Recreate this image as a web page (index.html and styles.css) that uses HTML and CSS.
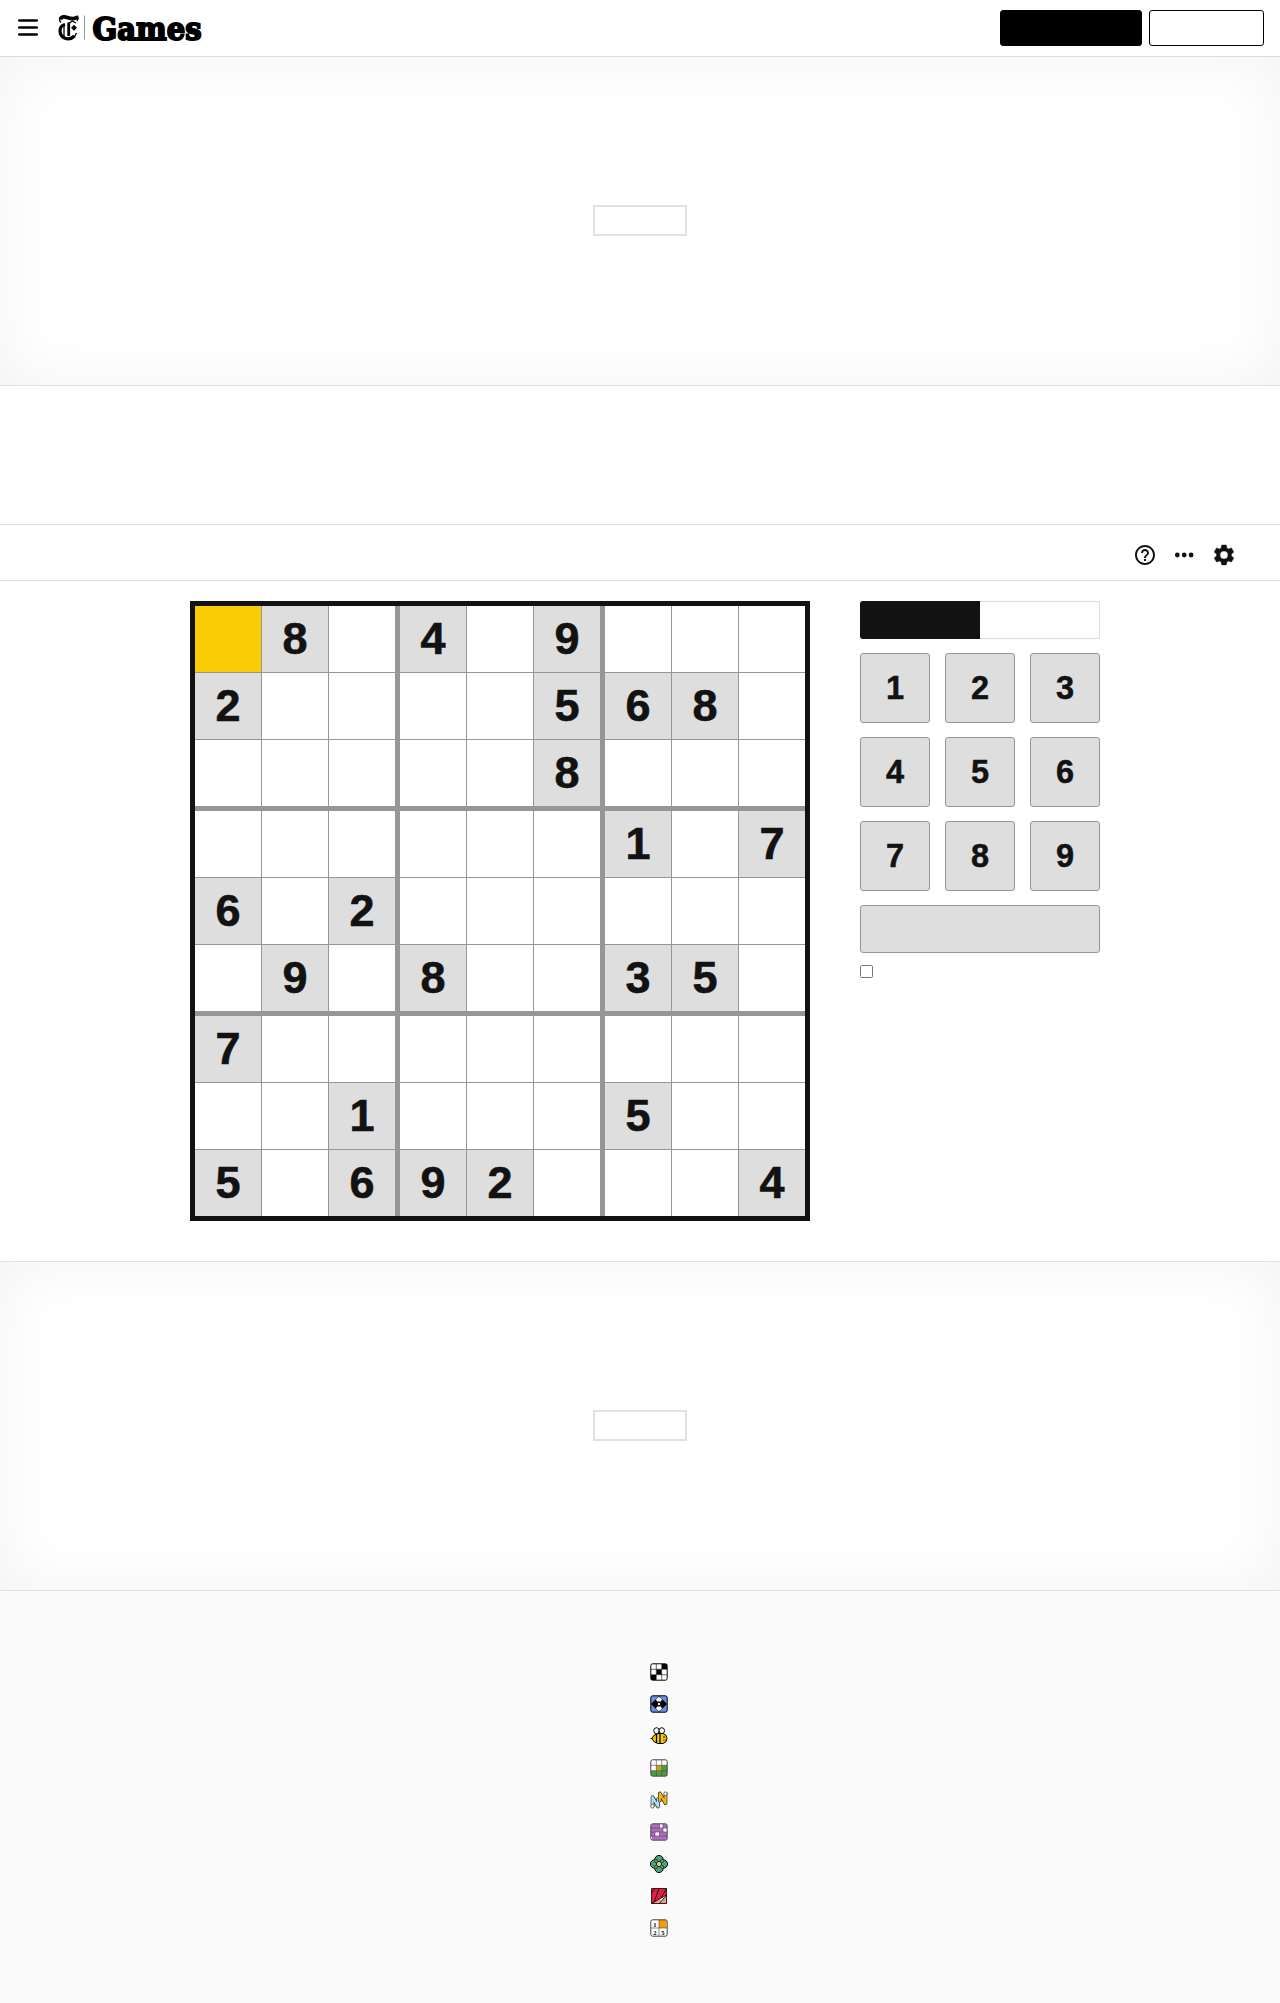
FILE: index.html
```html
<!DOCTYPE html>
<html lang="en">
<head>
<meta charset="utf-8">
<title>Sudoku</title>
<link rel="stylesheet" href="styles.css">
</head>
<body>
<header class="header">
  <svg class="menu" width="20" height="18" viewBox="0 0 20 18"><path d="M1.200 1.500h17.600M1.200 8.500h17.600M1.200 15.500h17.600" stroke="#000" stroke-width="2.500" stroke-linecap="round"/></svg>
  <svg class="logo" width="160" height="40" viewBox="0 -3 160 40">
    <g fill="none" stroke="#000"><path stroke-width="1.300" d="M4.800 11.500C2.500 9 3.500 6 6.500 5M20.500 22C19 27 14 29 10 28M8 13v13M12.500 12.500l4-2.500 3.500 2M21 10c1-2 2-3 .5-5.500"/><path stroke-width="3.800" d="M4.500 8.500C5.500 5.200 8.500 5.500 12 6.800S18.500 8.300 21.500 6"/><path stroke-width="3.200" d="M9 13.500C2.500 15 2.500 24 8.500 27 12 28.500 16 27.500 18.500 25"/><path stroke-width="2.800" d="M12.700 11.500V25"/></g>
    <path d="M18 13.800l3 3-3 3-3-3z"/>
    <path d="M28.500 4.500v24" stroke="#999"/>
    <text class="wordmark" x="36.500" y="28.700" textLength="109" lengthAdjust="spacingAndGlyphs">Games</text>
  </svg>
  <div class="actions"><button class="btn btn-dark" aria-label="Subscribe"></button><button class="btn btn-light" aria-label="Log in"></button></div>
</header>
<section class="ad"><div class="ad-box"></div></section>
<div class="title-area"></div>
<nav class="toolbar">
  <svg width="24" height="24" viewBox="0 0 24 24"><path fill="#121212" d="M11 18h2v-2h-2v2zm1-16C6.480 2 2 6.480 2 12s4.480 10 10 10 10-4.480 10-10S17.520 2 12 2zm0 18c-4.410 0-8-3.590-8-8s3.590-8 8-8 8 3.590 8 8-3.590 8-8 8zm0-14c-2.210 0-4 1.790-4 4h2c0-1.100.9-2 2-2s2 .9 2 2c0 2-3 1.750-3 5h2c0-2.250 3-2.500 3-5 0-2.210-1.790-4-4-4z"/></svg>
  <svg width="24" height="24" viewBox="0 0 24 24" fill="#121212"><circle cx="4.300" cy="12" r="2.400"/><circle cx="11.200" cy="12" r="2.400"/><circle cx="18.100" cy="12" r="2.400"/></svg>
  <svg width="24" height="24" viewBox="0 0 24 24"><path fill="#121212" stroke="#121212" stroke-width=".4" d="M19.430 12.980c.04-.32.070-.64.070-.98s-.03-.66-.07-.98l2.110-1.650c.19-.15.24-.42.12-.64l-2-3.460c-.12-.22-.39-.3-.61-.22l-2.490 1c-.52-.4-1.080-.73-1.690-.98l-.38-2.650C14.460 2.180 14.250 2 14 2h-4c-.25 0-.46.18-.49.42l-.38 2.650c-.61.25-1.170.59-1.690.98l-2.490-1c-.23-.09-.49 0-.61.22l-2 3.460c-.13.22-.07.49.12.64l2.110 1.650c-.04.32-.07.65-.07.98s.03.66.07.98l-2.110 1.650c-.19.15-.24.42-.12.64l2 3.460c.12.22.39.3.61.22l2.490-1c.52.4 1.080.73 1.690.98l.38 2.650c.03.24.24.42.49.42h4c.25 0 .46-.18.49-.42l.38-2.650c.61-.25 1.170-.59 1.690-.98l2.490 1c.23.09.49 0 .61-.22l2-3.460c.12-.22.070-.49-.12-.64l-2.110-1.650zM12 16a4 4 0 1 1 0-8 4 4 0 0 1 0 8z"/></svg>
</nav>
<main class="game">
  <div class="board">
    <div class="box"><i class="sel"></i><b>8</b><i></i><b>2</b><i></i><i></i><i></i><i></i><i></i></div>
    <div class="box"><b>4</b><i></i><b>9</b><i></i><i></i><b>5</b><i></i><i></i><b>8</b></div>
    <div class="box"><i></i><i></i><i></i><b>6</b><b>8</b><i></i><i></i><i></i><i></i></div>
    <div class="box"><i></i><i></i><i></i><b>6</b><i></i><b>2</b><i></i><b>9</b><i></i></div>
    <div class="box"><i></i><i></i><i></i><i></i><i></i><i></i><b>8</b><i></i><i></i></div>
    <div class="box"><b>1</b><i></i><b>7</b><i></i><i></i><i></i><b>3</b><b>5</b><i></i></div>
    <div class="box"><b>7</b><i></i><i></i><i></i><i></i><b>1</b><b>5</b><i></i><b>6</b></div>
    <div class="box"><i></i><i></i><i></i><i></i><i></i><i></i><b>9</b><b>2</b><i></i></div>
    <div class="box"><i></i><i></i><i></i><b>5</b><i></i><i></i><i></i><i></i><b>4</b></div>
  </div>
  <div class="controls">
    <div class="mode"><span class="mode-on"></span><span class="mode-off"></span></div>
    <div class="pad">
      <button class="key">1</button><button class="key">2</button><button class="key">3</button>
      <button class="key">4</button><button class="key">5</button><button class="key">6</button>
      <button class="key">7</button><button class="key">8</button><button class="key">9</button>
      <button class="key key-delete" aria-label="Delete"></button>
    </div>
    <input class="check" type="checkbox" aria-label="Auto candidate mode">
  </div>
</main>
<section class="ad"><div class="ad-box"></div></section>
<footer class="footer">
  <!-- Crossword -->
  <svg viewBox="0 0 18 18"><rect x=".8" y=".8" width="16.400" height="16.400" rx="1.800" fill="#fff"/><path d="M12 1h5v5h-5zM6.500 6.500h5v5h-5zM1 12h5v5H1z"/><path class="thin" d="M6.300 1v16M11.700 1v16M1 6.300h16M1 11.700h16"/><rect class="line" x=".8" y=".8" width="16.400" height="16.400" rx="1.800"/></svg>
  <!-- Mini -->
  <svg viewBox="0 0 18 18"><rect class="line" x=".8" y=".8" width="16.400" height="16.400" rx="1.800" fill="#6493e6"/><path d="M9 1L17 9 9 17 1 9z"/><path fill="#fff" d="M9 1.700l3 2.500-1 2.300H7L6 4.200zM9 16.300l3-2.500-1-2.300H7l-1 2.300zM9 7.500L10.500 9 9 10.500 7.500 9z"/></svg>
  <!-- Spelling Bee -->
  <svg viewBox="0 0 18 18"><g class="line"><ellipse cx="6.500" cy="3.700" rx="2.700" ry="3" fill="#fff"/><ellipse cx="11.800" cy="3.700" rx="2.700" ry="3" fill="#fff"/><path fill="#f8cd05" d="M8 6.500h5q4 1 4 5t-4 5H8q-5-1-6-5 1-4 6-5z"/><path d="M.5 11.500h2"/></g><path stroke="#000" stroke-width="1.300" d="M6.500 7v9M10 6.500v10"/><circle cx="14" cy="10" r=".8"/><path class="thin" d="M13 13q2 1 3-.5" fill="none"/></svg>
  <!-- Wordle -->
  <svg viewBox="0 0 18 18"><rect x="1" y="1" width="16" height="16" rx="2" fill="#fff"/><path fill="#4f9b43" d="M12 6.300h5V17H1v-5.300h11z"/><path fill="#c9a30a" d="M6.300 6.300h5.400v5.400H6.300z"/><path class="thin soft" d="M6.300 1v16M11.700 1v16M1 6.300h16M1 11.700h16"/><rect class="line soft" x=".8" y=".8" width="16.400" height="16.400" rx="1.800"/></svg>
  <!-- Strands -->
  <svg viewBox="0 0 18 18" fill="none" stroke-linecap="round" stroke-linejoin="round"><path stroke="#222" stroke-width="3.600" d="M2.500 15V6l5.500 9.500V8"/><path stroke="#aedfef" stroke-width="2.300" d="M2.500 15V6l5.500 9.500V8"/><path stroke="#222" stroke-width="3.600" d="M9.800 9.500V2.300l5.700 10V3"/><path stroke="#f0b919" stroke-width="2.300" d="M9.800 9.500V2.300l5.700 10V3"/><circle cx="2.500" cy="15.300" r="1.800" fill="#fff" stroke="#555" stroke-width=".8"/><circle cx="15.500" cy="2.700" r="1.800" fill="#fff" stroke="#555" stroke-width=".8"/></svg>
  <!-- Connections -->
  <svg viewBox="0 0 18 18"><rect x="1" y="1" width="16" height="16" rx="2" fill="#b568c8"/><path fill="#fff" d="M9.500 1H13v4H9.500zM13 5h4v4h-4zM5 9h4.500v4H5zM1 13h1v3H1z"/><path class="thin soft" d="M1 5h16M1 9h16M1 13h16M9.500 1v4M13 1v8M5 9v4M9.500 9v4"/><rect class="line soft" x=".8" y=".8" width="16.400" height="16.400" rx="1.800"/></svg>
  <!-- Tiles -->
  <svg viewBox="0 0 18 18"><g class="line" fill="#41a688"><circle cx="9" cy="4.600" r="4.200"/><circle cx="13.400" cy="9" r="4.200"/><circle cx="9" cy="13.400" r="4.200"/><circle cx="4.600" cy="9" r="4.200"/></g><path d="M5 5l8 8M13 5l-8 8" stroke="#000" stroke-width="3"/><path d="M5 5l8 8M13 5l-8 8" stroke="#8cab2a" stroke-width="1.800"/><circle cx="9" cy="9" r="2.500" fill="#fff" stroke="#000"/><path d="M9 8v2M8 9h2" stroke="#41a688" stroke-width=".7"/></svg>
  <!-- Letter Boxed -->
  <svg viewBox="0 0 18 18"><path fill="#e11f43" d="M1.500 1.500h15v15h-15z"/><path fill="#f0989b" d="M1.500 16.500L16.500 8v8.500z"/><path fill="#fff" d="M9.500 12l7-4-5 6z"/><path d="M1.500 1.500h15v15h-15zM5 1.500L1.500 6M16.500 1.500L11 11M9 1.500l-5 14M1.500 16.500l15-8.500M16.500 8l-7 8.500" fill="none" stroke="#000" stroke-width=".8"/></svg>
  <!-- Sudoku -->
  <svg viewBox="0 0 18 18"><rect x="1" y="1" width="16" height="16" rx="2" fill="#fff"/><path fill="#fb9b00" d="M9 1h7.500v8H9z"/><path class="thin soft" d="M9 1v16M1 9h16"/><rect class="line soft" x=".8" y=".8" width="16.400" height="16.400" rx="1.800"/><g class="digits"><text x="3.200" y="7.500">1</text><text x="3.200" y="15.500">2</text><text x="11.200" y="15.500">5</text></g></svg>
</footer>
</body>
</html>
```

FILE: styles.css
```css
* { box-sizing: border-box; }
body { margin: 0; background: #fff; color: #121212; font-family: "Liberation Sans", Arial, sans-serif; }
button { margin: 0; padding: 0; font: inherit; color: inherit; }
.header { display: flex; align-items: center; height: 57px; padding: 0 16px 0 18px; border-bottom: 1px solid #dcdcdc; }
.menu { margin-right: 18px; }
.logo { display: block; overflow: visible; }
.wordmark { font: bold 31.500px "DejaVu Serif", serif; stroke: #000; stroke-width: 2px; }
.actions { display: flex; gap: 7px; margin-left: auto; }
.btn { height: 36px; border: 1px solid #000; border-radius: 3px; }
.btn-dark { width: 142px; background: #000; }
.btn-light { width: 115px; background: #fff; }
.ad { display: flex; align-items: center; justify-content: center; height: 329px; padding-bottom: 2px; border-bottom: 1px solid #e2e2e2; box-shadow: inset 0 0 66px #f3f3f3; }
.ad-box { width: 94px; height: 31px; border: 2px solid #e2e2e2; background: #fff; }
.title-area { height: 138px; }
.toolbar { display: flex; align-items: center; justify-content: flex-end; gap: 15.500px; height: 57px; padding: 4px 44px 0 0; border-top: 1px solid #dcdcdc; border-bottom: 1px solid #dcdcdc; }
.game { display: flex; gap: 50px; height: 681px; padding: 20px 0 0 190px; border-bottom: 1px solid #e2e2e2; }
.board { display: grid; grid-template-columns: repeat(3, 200px); grid-template-rows: repeat(3, 200px); gap: 5px; width: 620px; height: 620px; border: 5px solid #121212; background: #969696; }
.box { display: grid; grid-template-columns: repeat(3, 66px); grid-template-rows: repeat(3, 66px); gap: 1px; }
.box i { background: #fff; }
.box .sel { background: #f8cd05; }
.box b { display: flex; align-items: center; justify-content: center; background: #dedede; font-size: 45px; line-height: 66px; -webkit-text-stroke: .6px #121212; }
.controls { width: 240px; }
.mode { display: flex; height: 38px; margin-bottom: 14px; }
.mode-on { flex: 1; background: #121212; border-radius: 3px 0 0 3px; }
.mode-off { flex: 1; border: 1px solid #dcdcdc; border-left: 0; border-radius: 0 3px 3px 0; }
.pad { display: grid; grid-template-columns: repeat(3, 70px); grid-auto-rows: 70px; gap: 14px 15px; }
.key { border: 1px solid #969696; border-radius: 3px; background: #dedede; font-size: 32.500px; font-weight: bold; -webkit-text-stroke: .5px #121212; }
.key-delete { grid-column: 1 / -1; height: 48px; }
.check { appearance: none; display: block; width: 13px; height: 13px; margin: -10px 0 0; border: 1px solid #767676; border-radius: 1.500px; background: #fff; }
.footer { display: flex; flex-direction: column; align-items: center; gap: 14px; height: 412px; padding: 72px 0 0 38px; background: #fafafa; }
.footer svg { display: block; width: 18px; height: 18px; flex: none; }
.line { stroke: #000; stroke-width: 1; }
rect.line:not([fill]) { fill: none; }
.thin { stroke: #000; stroke-width: .6; }
.footer .soft { stroke: #444; }
.digits { font: bold 6.500px "Liberation Serif", serif; }
```
